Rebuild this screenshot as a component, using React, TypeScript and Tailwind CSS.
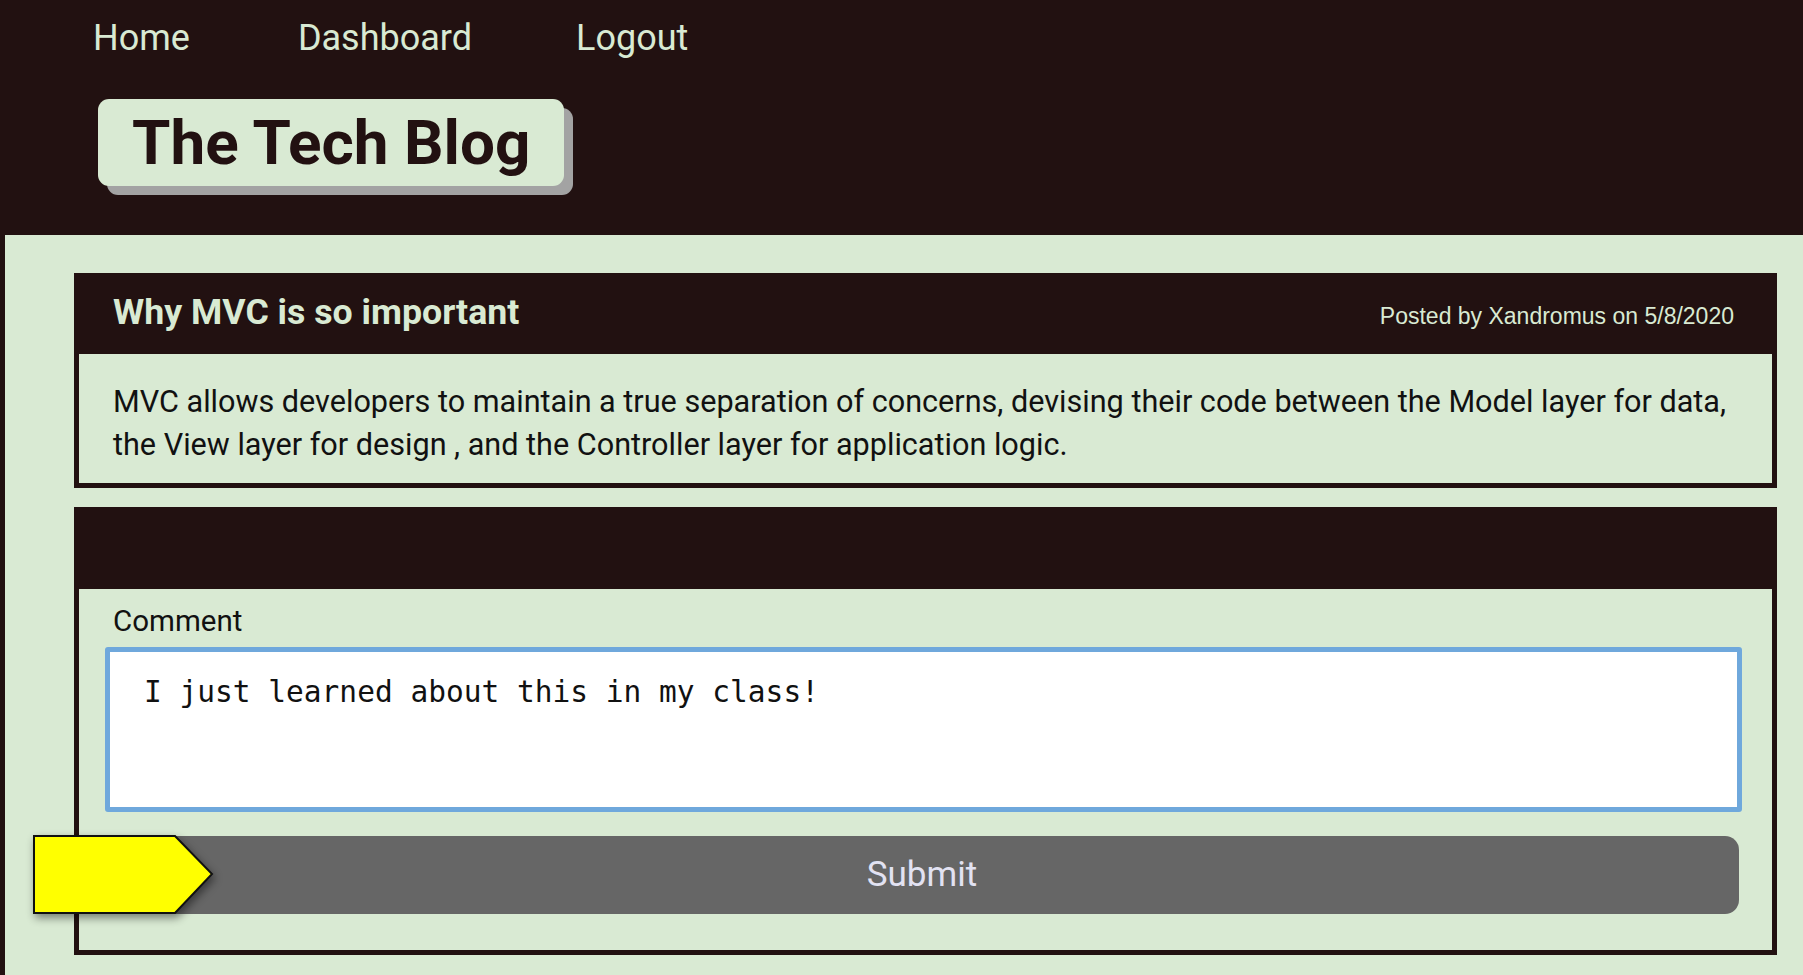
import React from "react";

const navLinks = [
  { label: "Home", gap: "mr-[108px]" },
  { label: "Dashboard", gap: "mr-[104px]" },
  { label: "Logout", gap: "" }
];

function PointerArrow() {
  return (
    <svg
      className="absolute left-[-72px] top-[-1px] drop-shadow-[2px_4px_4px_rgba(0,0,0,0.45)]"
      width="182"
      height="80"
      viewBox="0 0 182 80"
    >
      <polygon points="1,1 142,1 179,39 142,78 1,78" fill="#ffff00" stroke="#111" strokeWidth="2" />
    </svg>
  );
}

export default function App() {
  return (
    <div className="min-h-[975px] border-l-[5px] border-[#221111] bg-[#d9ead3] font-['Roboto',sans-serif]">
      <header className="h-[235px] bg-[#221111] pl-[88px] pt-[12px]">
        <nav className="flex text-[36px] leading-[52px] text-[#d9ead3]">
          {navLinks.map((link) => (
            <a key={link.label} href="#" className={`block ${link.gap}`}>
              {link.label}
            </a>
          ))}
        </nav>
        <div className="ml-[5px] mt-[35px] inline-block rounded-[11px] bg-[#d9ead3] px-[34px] shadow-[9px_9px_0_#a3a3a3]">
          <h1 className="text-[62px] font-bold leading-[87px] text-[#221111]">The Tech Blog</h1>
        </div>
      </header>

      <main className="flex flex-col gap-[19px] pl-[69px] pr-[26px] pt-[38px]">
        <section className="border-[5px] border-t-0 border-[#221111]">
          <div className="flex h-[81px] items-center justify-between bg-[#221111] pl-[34px] pr-[38px]">
            <h2 className="pb-[2px] text-[35.7px] font-bold text-[#d9ead3]">Why MVC is so important</h2>
            <p className="pt-[6px] font-['Liberation_Sans',sans-serif] text-[23px] text-[#d9ead3]">
              Posted by Xandromus on 5/8/2020
            </p>
          </div>
          <p className="px-[34px] pb-[17px] pt-[26px] text-[30.6px] leading-[43px] text-[#111]">
            MVC allows developers to maintain a true separation of concerns, devising their code between the Model layer
            for data, the View layer for design , and the Controller layer for application logic.
          </p>
        </section>

        <section className="border-[5px] border-t-0 border-[#221111]">
          <div className="h-[82px] bg-[#221111]" />
          <form className="flex flex-col pb-[36px] pl-[26px] pr-[30px] pt-[11px]">
            <label className="pl-[8px] text-[29.5px] leading-[43px] text-[#111]">Comment</label>
            <textarea
              defaultValue="I just learned about this in my class!"
              className="mt-[4px] h-[165px] resize-none rounded-[3px] border-[5px] border-[#6fa8dc] bg-white px-[34px] pb-[14px] pt-[20px] font-['DejaVu_Sans_Mono',monospace] text-[29.5px] leading-[40px] text-[#111] outline-none"
            />
            <div className="relative mt-[24px]">
              <button
                type="button"
                className="h-[78px] w-[calc(100%-3px)] rounded-[14px] bg-[#666666] text-[35px] text-[#e2e2f2]"
              >
                Submit
              </button>
              <PointerArrow />
            </div>
          </form>
        </section>
      </main>
    </div>
  );
}
